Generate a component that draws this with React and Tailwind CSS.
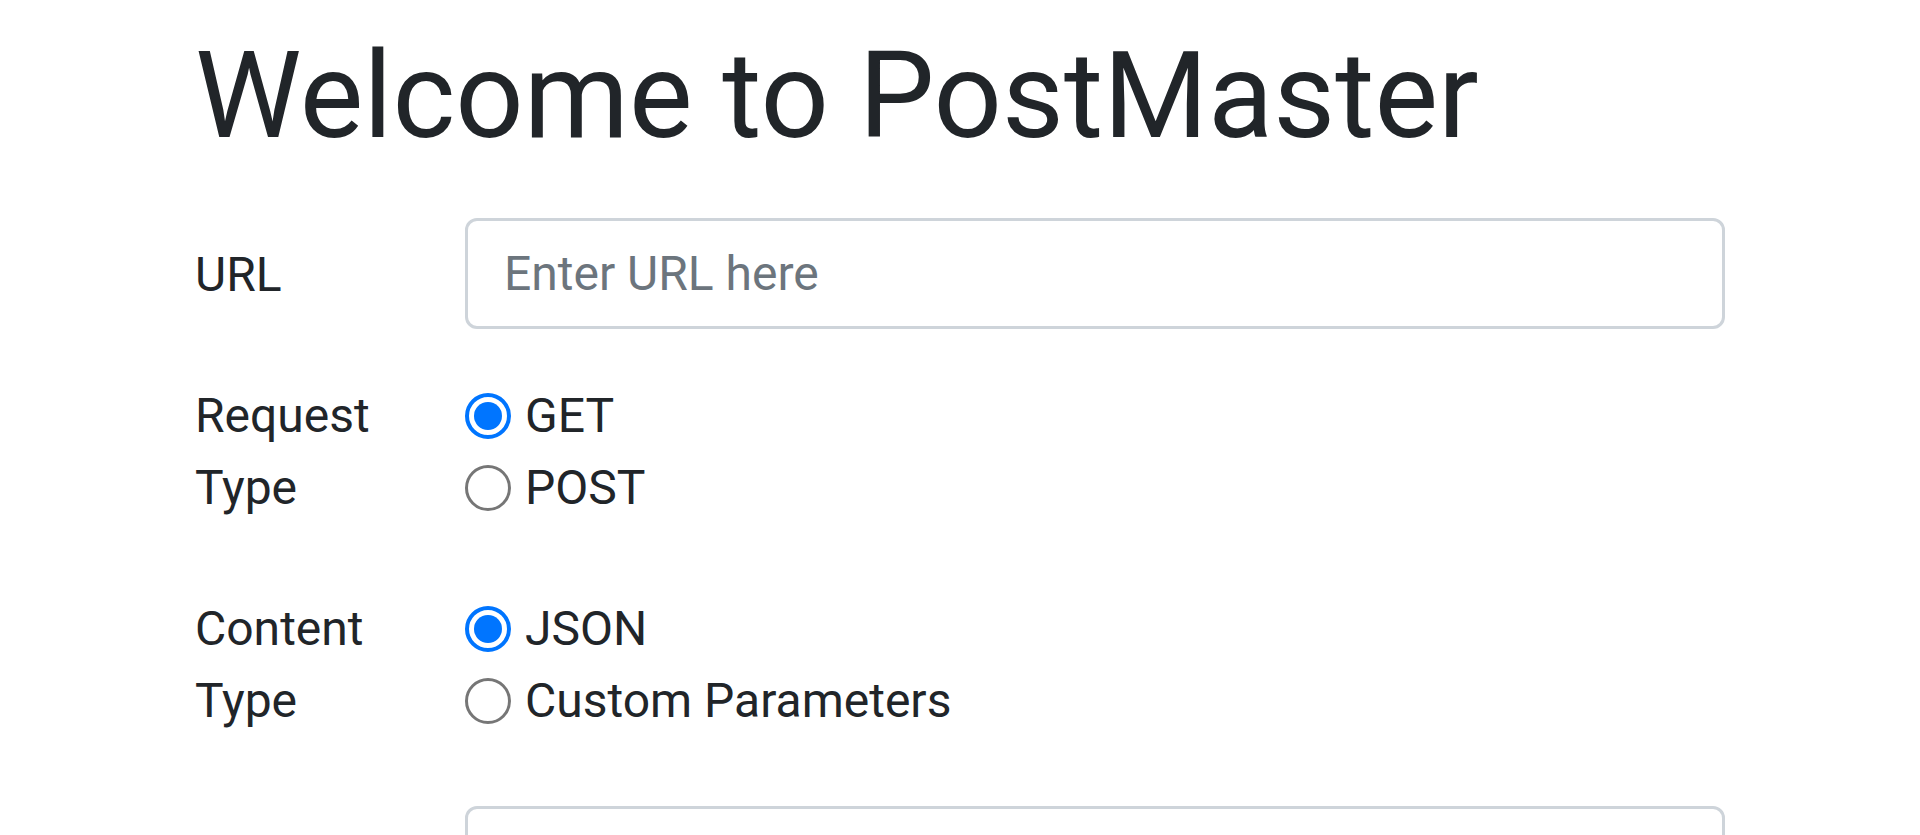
import { useState } from 'react';

function Radio({ checked, label, onClick }) {
  return (
    <label className="flex items-center h-[72px] cursor-pointer" onClick={onClick}>
      {checked ? (
        <span className="w-[46px] h-[46px] rounded-full border-[4px] border-[#0075ff] flex items-center justify-center shrink-0">
          <span className="w-[28px] h-[28px] rounded-full bg-[#0075ff]" />
        </span>
      ) : (
        <span className="w-[46px] h-[46px] rounded-full border-[3px] border-[#767676] shrink-0" />
      )}
      <span className="ml-[14px]">{label}</span>
    </label>
  );
}

export default function App() {
  const [method, setMethod] = useState('GET');
  const [contentType, setContentType] = useState('JSON');

  return (
    <div className="min-h-screen bg-white text-[#212529] font-['Roboto',sans-serif] text-[48px] leading-[72px]">
      <div className="w-[1620px] mx-auto px-[45px] pt-[24px]">
        <h1 className="text-[120px] leading-[144px] font-normal mb-[50px]">Welcome to PostMaster</h1>

        <form>
          <div className="flex mb-[48px]">
            <label className="w-[270px] shrink-0 py-[21px]">URL</label>
            <div className="flex-1">
              <input
                type="text"
                placeholder="Enter URL here"
                className="w-full h-[111px] px-[36px] border-[3px] border-[#ced4da] rounded-[12px] placeholder:text-[#6c757d] outline-none"
              />
            </div>
          </div>

          <div className="flex mb-[48px]">
            <div className="w-[270px] shrink-0 pb-[21px]">
              <div>Request</div>
              <div>Type</div>
            </div>
            <div className="flex-1">
              {['GET', 'POST'].map((m) => (
                <Radio key={m} label={m} checked={method === m} onClick={() => setMethod(m)} />
              ))}
            </div>
          </div>

          <div className="flex mb-[48px]">
            <div className="w-[270px] shrink-0 pb-[21px]">
              <div>Content</div>
              <div>Type</div>
            </div>
            <div className="flex-1">
              {['JSON', 'Custom Parameters'].map((c) => (
                <Radio key={c} label={c} checked={contentType === c} onClick={() => setContentType(c)} />
              ))}
            </div>
          </div>

          <div className="flex mb-[48px]">
            <div className="w-[270px] shrink-0" />
            <div className="flex-1">
              <textarea className="w-full h-[300px] px-[36px] py-[18px] border-[3px] border-[#ced4da] rounded-[12px] outline-none resize-none" />
            </div>
          </div>
        </form>
      </div>
    </div>
  );
}
